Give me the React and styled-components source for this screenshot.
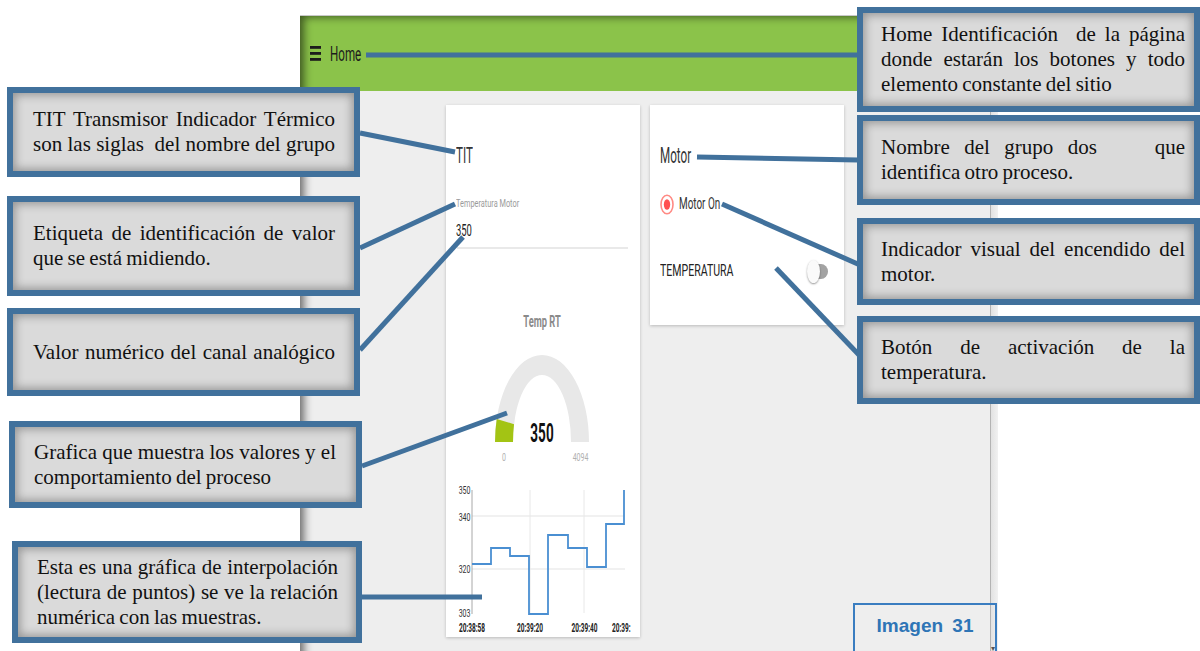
import React from 'react';
import styled, { createGlobalStyle } from 'styled-components';

const LINE = '#41719c';

const GlobalStyle = createGlobalStyle`
  html, body {
    margin: 0;
    padding: 0;
    background: #ffffff;
  }
`;

/**
 * Page + screenshot frame
 */
const Page = styled.div`
  position: relative;
  width: 1200px;
  height: 651px;
  overflow: hidden;
  background: #ffffff;
`;

const Frame = styled.div`
  position: relative;
  display: flex;
  flex-direction: column;
  box-sizing: border-box;
  width: 698px;
  height: 636px;
  margin: 15px 0 0 300px;
  border-top: 1px solid #c9c9c9;
  font-family: Roboto, "Liberation Sans", sans-serif;

  &::after {
    content: '';
    position: absolute;
    inset: 0;
    pointer-events: none;
    box-shadow: inset 8px 5px 8px -4px rgba(0, 0, 0, 0.55);
  }
`;

const TopBar = styled.header`
  display: flex;
  align-items: center;
  gap: 9px;
  height: 75px;
  padding-left: 10px;
  background: #8bc34a;
  color: #1c1c1c;
`;

const BarTitle = styled.div`
  font-size: 20px;
  line-height: 20px;
  transform: scaleX(0.58);
  transform-origin: left center;
`;

const Viewport = styled.div`
  flex: 1;
  display: flex;
  min-height: 0;
`;

const Content = styled.main`
  flex: 1;
  display: flex;
  justify-content: center;
  align-items: flex-start;
  gap: 10px;
  padding-top: 14px;
  background: #eeeeee;
`;

const Scrollbar = styled.div`
  position: relative;
  width: 8px;
  background: linear-gradient(to right, #b3b3b3 0, #b3b3b3 1px, #e2e2e2 1px, #f1f1f1 100%);

  &::after {
    content: '▾';
    position: absolute;
    left: 1px;
    bottom: -2px;
    font-size: 8px;
    color: #555;
  }
`;

/**
 * Cards
 */
const Card = styled.section`
  box-sizing: border-box;
  display: flex;
  flex-direction: column;
  width: 194px;
  height: ${p => p.$h}px;
  padding: 40px ${p => p.$pr}px 0 10px;
  background: #ffffff;
  box-shadow: 0 1px 3px rgba(0, 0, 0, 0.22);
  color: #333;
`;

const CardTitle = styled.div`
  font-size: 22px;
  line-height: 22px;
  white-space: nowrap;
  transform: scaleX(0.53);
  transform-origin: left center;
`;

const FieldLabel = styled.div`
  margin-top: 30px;
  font-size: 11px;
  line-height: 13px;
  color: #9a9a9a;
  white-space: nowrap;
  transform: scaleX(0.67);
  transform-origin: left center;
`;

const FieldValue = styled.div`
  margin-top: 13px;
  font-size: 16px;
  line-height: 16px;
  color: #222;
  transform: scaleX(0.59);
  transform-origin: left center;
`;

const Divider = styled.div`
  margin: 8px 0 0 1px;
  height: 2px;
  background: #e9e9e9;
`;

const GaugeTitle = styled.div`
  margin-top: 65px;
  font-size: 16px;
  line-height: 16px;
  font-weight: 700;
  color: #8a8a8a;
  text-align: center;
  transform: scaleX(0.58);
`;

const GaugeSvg = styled.svg`
  display: block;
  margin-top: 20px;
  overflow: visible;
`;

const ChartSvg = styled.svg`
  display: block;
  margin-top: 15px;
  overflow: visible;
`;

const StatusRow = styled.div`
  display: flex;
  align-items: center;
  gap: 5px;
  height: 20px;
  margin-top: 27px;
`;

const StatusText = styled.span`
  font-size: 16px;
  line-height: 16px;
  color: #333;
  white-space: nowrap;
  transform: scaleX(0.62);
  transform-origin: left center;
`;

const ToggleRow = styled.div`
  display: flex;
  justify-content: space-between;
  align-items: center;
  height: 24px;
  margin-top: 45px;
  padding-right: 6px;
`;

const ToggleLabel = styled.span`
  font-size: 16px;
  line-height: 16px;
  color: #222;
  white-space: nowrap;
  transform: scaleX(0.66);
  transform-origin: left center;
`;

const Switch = styled.div`
  position: relative;
  width: 19px;
  height: 15px;
  border-radius: 7px / 7.5px;
  background: #a3a3a3;
`;

const Thumb = styled.span`
  position: absolute;
  left: -2px;
  top: -4px;
  width: 13px;
  height: 23px;
  border-radius: 50%;
  background: #fafafa;
  box-shadow: 0 1px 2px rgba(0, 0, 0, 0.4);
`;

/**
 * Annotation layer
 */
const Wires = styled.svg`
  position: absolute;
  left: 0;
  top: 0;
  pointer-events: none;
`;

const Note = styled.div`
  position: absolute;
  left: ${p => p.$x}px;
  top: ${p => p.$y}px;
  width: ${p => p.$w}px;
  height: ${p => p.$h}px;
  box-sizing: border-box;
  display: flex;
  flex-direction: column;
  justify-content: center;
  padding: 0 ${p => p.$pr}px 0 ${p => p.$pl}px;
  border: 6px solid ${LINE};
  background: #dadada;
  box-shadow: inset 0 0 10px 2px rgba(0, 0, 0, 0.32);
  font-family: "Liberation Serif", "Times New Roman", serif;
  font-size: 21px;
  line-height: 25px;
  color: #111;
`;

const NoteLine = styled.div`
  white-space: pre-wrap;
  word-spacing: -1px;
  text-align: ${p => (p.$fill ? 'justify' : 'left')};
  text-align-last: ${p => (p.$fill ? 'justify' : 'auto')};
`;

const Caption = styled.div`
  position: absolute;
  left: 853px;
  top: 603px;
  width: 144px;
  height: 60px;
  box-sizing: border-box;
  padding-top: 10px;
  border: 2px solid #3a7dc0;
  text-align: center;
  font-family: "Liberation Sans", Arial, sans-serif;
  font-weight: 700;
  font-size: 19px;
  line-height: 22px;
  word-spacing: 4px;
  color: #2e75b6;
`;

/**
 * Data
 */
const connectors = [
  [366, 55, 858, 55],
  [360, 133, 455, 152],
  [360, 248, 455, 204],
  [360, 350, 463, 237],
  [362, 466, 507, 413],
  [362, 597, 482, 597],
  [697, 157, 858, 160],
  [722, 204, 860, 265],
  [776, 268, 860, 356],
];

const notes = [
  { x: 7, y: 87, w: 353, h: 90, pl: 20, pr: 19, lines: [['TIT Transmisor Indicador Térmico', true], ['son las siglas  del nombre del grupo', true]] },
  { x: 7, y: 196, w: 353, h: 100, pl: 20, pr: 19, lines: [['Etiqueta de identificación de valor', true], ['que se está midiendo.', false]] },
  { x: 7, y: 308, w: 353, h: 88, pl: 20, pr: 19, lines: [['Valor numérico del canal analógico', true]] },
  { x: 9, y: 421, w: 353, h: 87, pl: 19, pr: 20, lines: [['Grafica que muestra los valores y el', true], ['comportamiento del proceso', false]] },
  { x: 12, y: 541, w: 350, h: 102, pl: 19, pr: 18, lines: [['Esta es una gráfica de interpolación', true], ['(lectura de puntos) se ve la relación', true], ['numérica con las muestras.', false]] },
  { x: 857, y: 7, w: 343, h: 105, pl: 18, pr: 9, lines: [['Home Identificación  de la página', true], ['donde estarán los botones y todo', true], ['elemento constante del sitio', false]] },
  { x: 857, y: 115, w: 343, h: 90, pl: 18, pr: 9, lines: [['Nombre del grupo dos    que', true], ['identifica otro proceso.', false]] },
  { x: 857, y: 218, w: 343, h: 87, pl: 18, pr: 9, lines: [['Indicador visual del encendido del', true], ['motor.', false]] },
  { x: 857, y: 316, w: 343, h: 88, pl: 18, pr: 9, lines: [['Botón de activación de la', true], ['temperatura.', false]] },
];

const steps = '16,84 35,84 35,68 54,68 54,76 73,76 73,134 92,134 92,55 112,55 112,68 131,68 131,87 150,87 150,44 168,44 168,10';

const MenuIcon = () => (
  <svg width="11" height="15" viewBox="0 0 11 15">
    <rect x="0" y="0" width="11" height="2.8" fill="#1c1c1c" />
    <rect x="0" y="6" width="11" height="2.8" fill="#1c1c1c" />
    <rect x="0" y="12" width="11" height="2.8" fill="#1c1c1c" />
  </svg>
);

const Gauge = ({ value, max }) => {
  const cx = 86, by = 92, R = 47, RY = 87, r = 29, ry = 67;
  const a = (Math.PI * value) / max;
  const ox = cx - R * Math.cos(a), oy = by - RY * Math.sin(a);
  const ix = cx - r * Math.cos(a), iy = by - ry * Math.sin(a);
  const track = `M${cx - R} ${by} A${R} ${RY} 0 0 1 ${cx + R} ${by} L${cx + r} ${by} A${r} ${ry} 0 0 0 ${cx - r} ${by} Z`;
  const fill = `M${cx - R} ${by} A${R} ${RY} 0 0 1 ${ox} ${oy} L${ix} ${iy} A${r} ${ry} 0 0 0 ${cx - r} ${by} Z`;
  return (
    <GaugeSvg width="172" height="115" viewBox="0 0 172 115">
      <path d={track} fill="#e8e8e8" />
      <path d={fill} fill="#a3c414" />
      <text transform={`translate(${cx} 91.5) scale(0.52 1)`} textAnchor="middle" fontSize="26" fontWeight="700" fill="#111">{value}</text>
      <text transform="translate(48 111) scale(0.7 1)" textAnchor="middle" fontSize="10" fill="#b0b0b0">0</text>
      <text transform="translate(124.5 111) scale(0.7 1)" textAnchor="middle" fontSize="10" fill="#b0b0b0">{max}</text>
    </GaugeSvg>
  );
};

const yTicks = [['350', 14], ['340', 40.5], ['320', 93], ['303', 136.5]];
const xTicks = [['20:38:58', 16, 'middle'], ['20:39:20', 74, 'middle'], ['20:39:40', 128.5, 'middle'], ['20:39:', 156, 'start']];

const StepChart = () => (
  <ChartSvg width="172" height="157" viewBox="0 0 172 157">
    <line x1="16" y1="36" x2="169" y2="36" stroke="#e3e3e3" />
    <line x1="16" y1="89" x2="169" y2="89" stroke="#e3e3e3" />
    <line x1="74" y1="10" x2="74" y2="133" stroke="#e8e8e8" />
    <line x1="128" y1="10" x2="128" y2="133" stroke="#e8e8e8" />
    <line x1="16" y1="10" x2="16" y2="134" stroke="#a8a8a8" />
    <polyline points={steps} fill="none" stroke="#4a8fd2" strokeWidth="1.8" />
    {yTicks.map(([t, y]) => (
      <text key={t} transform={`translate(14.5 ${y}) scale(0.64 1)`} textAnchor="end" fontSize="11" fill="#333">{t}</text>
    ))}
    {xTicks.map(([t, x, anchor]) => (
      <text key={t} transform={`translate(${x} 152) scale(0.5 1)`} textAnchor={anchor} fontSize="13" fontWeight="700" fill="#222">{t}</text>
    ))}
  </ChartSvg>
);

const Radio = () => (
  <svg width="14" height="21" viewBox="0 0 14 21">
    <ellipse cx="7" cy="10.5" rx="6" ry="9.3" fill="none" stroke="#ff8a84" strokeWidth="1.6" />
    <ellipse cx="7" cy="10.5" rx="3.2" ry="5.2" fill="#ff4f4f" />
  </svg>
);

/**
 * App
 */
const App = () => {
  return (
    <Page>
      <GlobalStyle />
      <Frame>
        <TopBar>
          <MenuIcon />
          <BarTitle>Home</BarTitle>
        </TopBar>
        <Viewport>
          <Content>
            <Card $h={532} $pr={12}>
              <CardTitle>TIT</CardTitle>
              <FieldLabel>Temperatura Motor</FieldLabel>
              <FieldValue>350</FieldValue>
              <Divider />
              <GaugeTitle>Temp RT</GaugeTitle>
              <Gauge value={350} max={4094} />
              <StepChart />
            </Card>
            <Card $h={220} $pr={10}>
              <CardTitle>Motor</CardTitle>
              <StatusRow>
                <Radio />
                <StatusText>Motor On</StatusText>
              </StatusRow>
              <ToggleRow>
                <ToggleLabel>TEMPERATURA</ToggleLabel>
                <Switch>
                  <Thumb />
                </Switch>
              </ToggleRow>
            </Card>
          </Content>
          <Scrollbar />
        </Viewport>
      </Frame>

      <Wires width="1200" height="651" viewBox="0 0 1200 651">
        {connectors.map(([x1, y1, x2, y2], i) => (
          <line key={i} x1={x1} y1={y1} x2={x2} y2={y2} stroke={LINE} strokeWidth="5" />
        ))}
      </Wires>

      {notes.map((n, i) => (
        <Note key={i} $x={n.x} $y={n.y} $w={n.w} $h={n.h} $pl={n.pl} $pr={n.pr}>
          {n.lines.map(([text, fill], j) => (
            <NoteLine key={j} $fill={fill}>{text}</NoteLine>
          ))}
        </Note>
      ))}

      <Caption>Imagen 31</Caption>
    </Page>
  );
};

export default App;
